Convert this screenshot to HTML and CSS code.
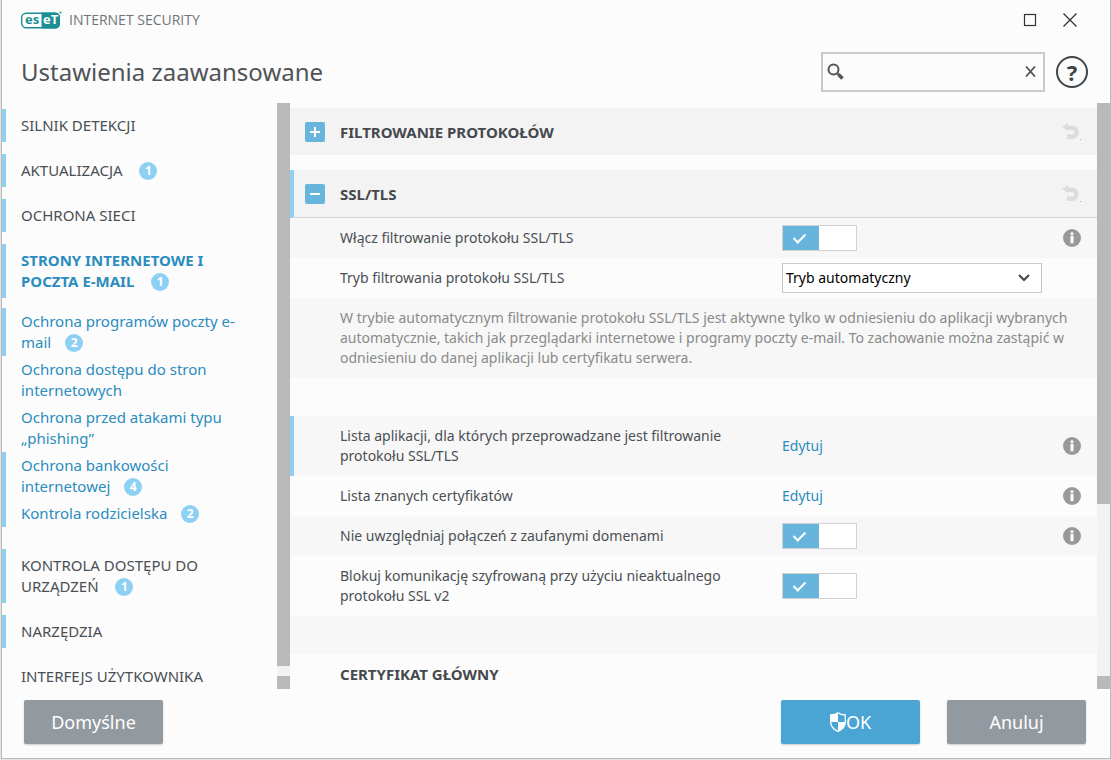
FILE: index.html
```html
<!DOCTYPE html>
<html lang="pl">
<head>
<meta charset="utf-8">
<title>Ustawienia zaawansowane</title>
<link rel="stylesheet" href="styles.css">
</head>
<body>
<svg class="defs" aria-hidden="true">
  <symbol id="undo" viewBox="0 0 20 18">
    <path d="M4.500 4.800h5.500a4.500 4.500 0 0 1 0 9H5" fill="none" stroke="currentColor" stroke-width="4.400"/>
    <path d="M0 3.800 6 0v8z" fill="currentColor"/>
    <path d="M18 16h1v1h-1z" fill="#aaa"/>
  </symbol>
  <symbol id="info" viewBox="0 0 18 18">
    <circle cx="9" cy="9" r="9" fill="#999"/>
    <path d="M7.500 3.500h3v2.200h-3zM7.500 6.700h3v7.500h-3z" fill="#fff"/>
  </symbol>
</svg>
<div class="window">
  <header class="titlebar">
    <div class="brand">
      <svg class="logo" viewBox="0 0 41 18" role="img" aria-label="ESET">
        <rect x="0.700" y="2.200" width="37.600" height="14.600" rx="4.500" fill="#fff" stroke="#1b8f94" stroke-width="1.400"/>
        <path d="M20.500 1.500h14a4.500 4.500 0 0 1 4.500 4.500v7a4.500 4.500 0 0 1-4.500 4.500h-14z" fill="#1b8f94"/>
        <text class="logo-text teal" x="4" y="13">es</text>
        <text class="logo-text" x="22" y="13">eT</text>
        <circle cx="39.500" cy="1.500" r="1" fill="#1b8f94"/>
      </svg>
      <span class="product">INTERNET SECURITY</span>
    </div>
    <div class="window-buttons">
      <button type="button" class="icon-button" aria-label="Maksymalizuj">
        <svg width="14" height="14" viewBox="0 0 14 14"><rect x="1.500" y="1.500" width="11" height="11" fill="none" stroke="#333" stroke-width="1.200"/></svg>
      </button>
      <button type="button" class="icon-button" aria-label="Zamknij">
        <svg width="14" height="14" viewBox="0 0 14 14"><path d="M0.500 0.500l13 13M13.500 0.500l-13 13" stroke="#333" stroke-width="1.300"/></svg>
      </button>
    </div>
  </header>
  <div class="heading">
    <h1>Ustawienia zaawansowane</h1>
    <div class="search">
      <svg width="17" height="17" viewBox="0 0 17 17" aria-hidden="true"><circle cx="6.500" cy="6.500" r="5" fill="none" stroke="#555" stroke-width="2"/><path d="M10 10l2 2" stroke="#555" stroke-width="2"/><path d="M11.500 11.500l4 4" stroke="#555" stroke-width="3.600"/></svg>
      <input type="text" aria-label="Szukaj">
      <button type="button" class="icon-button" aria-label="Wyczyść">
        <svg width="11" height="11" viewBox="0 0 11 11"><path d="M1 0.500l9 10M10 0.500l-9 10" stroke="#555" stroke-width="1.800"/></svg>
      </button>
    </div>
    <button type="button" class="help" aria-label="Pomoc">?</button>
  </div>
  <div class="body">
    <nav class="sidebar">
      <a href="#" class="item changed">SILNIK DETEKCJI</a>
      <a href="#" class="item changed">AKTUALIZACJA <span class="badge">1</span></a>
      <a href="#" class="item changed">OCHRONA SIECI</a>
      <a href="#" class="item changed active">STRONY INTERNETOWE I POCZTA E-MAIL <span class="badge">1</span></a>
      <div class="submenu">
        <a href="#" class="subitem changed">Ochrona programów poczty e-mail <span class="badge">2</span></a>
        <a href="#" class="subitem">Ochrona dostępu do stron internetowych</a>
        <a href="#" class="subitem">Ochrona przed atakami typu „phishing”</a>
        <a href="#" class="subitem changed">Ochrona bankowości internetowej <span class="badge">4</span></a>
        <a href="#" class="subitem changed">Kontrola rodzicielska <span class="badge">2</span></a>
      </div>
      <a href="#" class="item changed">KONTROLA DOSTĘPU DO URZĄDZEŃ <span class="badge">1</span></a>
      <a href="#" class="item changed">NARZĘDZIA</a>
      <a href="#" class="item">INTERFEJS UŻYTKOWNIKA</a>
    </nav>
    <div class="scrollbar nav-scroll"><div class="thumb"></div><div></div><div class="thumb"></div></div>
    <main class="content">
      <section class="section">
        <div class="section-head">
          <button type="button" class="expander" aria-label="Rozwiń"><svg width="20" height="20" viewBox="0 0 20 20"><path d="M5 10h10M10 5v10" stroke="#fff" stroke-width="2"/></svg></button>
          <h2>FILTROWANIE PROTOKOŁÓW</h2>
          <button type="button" class="icon-button undo" aria-label="Przywróć"><svg width="20" height="18"><use href="#undo"/></svg></button>
        </div>
      </section>
      <section class="section">
        <div class="section-head changed open">
          <button type="button" class="expander" aria-label="Zwiń"><svg width="20" height="20" viewBox="0 0 20 20"><path d="M5 10h10" stroke="#fff" stroke-width="2"/></svg></button>
          <h2>SSL/TLS</h2>
          <button type="button" class="icon-button undo" aria-label="Przywróć"><svg width="20" height="18"><use href="#undo"/></svg></button>
        </div>
        <div class="rows">
          <div class="row">
            <label class="name" for="ssl">Włącz filtrowanie protokołu SSL/TLS</label>
            <div class="control"><input type="checkbox" class="toggle" id="ssl" checked></div>
            <svg class="info"><use href="#info"/></svg>
          </div>
          <div class="row">
            <label class="name" for="mode">Tryb filtrowania protokołu SSL/TLS</label>
            <div class="control">
              <div class="select">
                <select id="mode"><option>Tryb automatyczny</option></select>
                <svg class="chevron" viewBox="0 0 12 8" aria-hidden="true"><path d="M1 1l5 5 5-5" fill="none" stroke="#444" stroke-width="2"/></svg>
              </div>
            </div>
          </div>
          <p class="row note">W trybie automatycznym filtrowanie protokołu SSL/TLS jest aktywne tylko w odniesieniu do aplikacji wybranych automatycznie, takich jak przeglądarki internetowe i programy poczty e-mail. To zachowanie można zastąpić w odniesieniu do danej aplikacji lub certyfikatu serwera.</p>
          <div class="row spacer"></div>
          <div class="row changed">
            <span class="name">Lista aplikacji, dla których przeprowadzane jest filtrowanie protokołu SSL/TLS</span>
            <div class="control"><a href="#">Edytuj</a></div>
            <svg class="info"><use href="#info"/></svg>
          </div>
          <div class="row">
            <span class="name">Lista znanych certyfikatów</span>
            <div class="control"><a href="#">Edytuj</a></div>
            <svg class="info"><use href="#info"/></svg>
          </div>
          <div class="row">
            <label class="name" for="trusted">Nie uwzględniaj połączeń z zaufanymi domenami</label>
            <div class="control"><input type="checkbox" class="toggle" id="trusted" checked></div>
            <svg class="info"><use href="#info"/></svg>
          </div>
          <div class="row">
            <label class="name" for="sslv2">Blokuj komunikację szyfrowaną przy użyciu nieaktualnego protokołu SSL v2</label>
            <div class="control"><input type="checkbox" class="toggle" id="sslv2" checked></div>
          </div>
          <div class="row spacer"></div>
          <div class="row"><h2>CERTYFIKAT GŁÓWNY</h2></div>
        </div>
      </section>
    </main>
    <div class="scrollbar content-scroll"><div class="thumb"></div><div></div><div class="thumb"></div></div>
  </div>
  <footer class="footer">
    <button type="button" class="button">Domyślne</button>
    <div class="actions">
      <button type="button" class="button primary">
        <svg width="16" height="20" viewBox="0 0 16 20" aria-hidden="true"><path d="M8 0.700C10 2.500 12.500 3 15.300 3v7c0 4-3 7.500-7.300 9.300C3.700 17.500 0.700 14 0.700 10V3C3.500 3 6 2.500 8 0.700z" fill="none" stroke="#fff" stroke-width="1.300"/><path d="M8 1v9H1V3C4 3 6 2.500 8 1zM8 10h7c0 4-3 7.500-7 9z" fill="#fff"/></svg>OK
      </button>
      <button type="button" class="button">Anuluj</button>
    </div>
  </footer>
</div>
</body>
</html>
```

FILE: styles.css
```css
* { box-sizing: border-box; }

body {
  margin: 0;
  height: 100vh;
  padding: 0 0 1px 1px;
  background: #e4e4e4;
  font-family: "Noto Sans", "Open Sans", sans-serif;
  font-size: 14px;
  line-height: 20px;
  color: #4a4f54;
}

h1, h2, p { margin: 0; }
a { color: #2b8cbe; text-decoration: none; }
button, input, select { font: inherit; color: inherit; }
svg { display: block; flex: none; }
.defs { display: none; }

.window {
  display: flex;
  flex-direction: column;
  height: 100%;
  background: #fcfcfc;
  border: 1px solid #b9b9b9;
  border-width: 0 1px 1px;
}

.icon-button {
  display: flex;
  align-items: center;
  justify-content: center;
  padding: 0;
  border: 0;
  background: none;
}

.titlebar {
  display: flex;
  align-items: center;
  justify-content: space-between;
  height: 40px;
  padding: 0 33px 0 19px;
}
.brand { display: flex; align-items: center; gap: 7px; }
.logo { width: 41px; height: 18px; }
.logo-text { font: bold 13px "Open Sans", sans-serif; fill: #fff; }
.logo-text.teal { fill: #1b8f94; }
.product { font-family: "Open Sans", sans-serif; font-size: 14px; color: #6f7478; }
.window-buttons { display: flex; gap: 26px; }

.heading {
  display: flex;
  align-items: center;
  height: 63px;
  padding: 0 22px 0 19px;
}
h1 { flex: 1; font-size: 24px; line-height: 32px; font-weight: 400; color: #505355; }
.search {
  display: flex;
  align-items: center;
  width: 224px;
  height: 40px;
  margin-right: 11px;
  padding: 0 7px 0 4px;
  border: 2px solid #cacaca;
}
.search input {
  flex: 1;
  min-width: 0;
  border: 0;
  background: none;
  outline: 0;
}
.help {
  width: 32px;
  height: 32px;
  padding: 0;
  border: 2px solid #3d4449;
  border-radius: 50%;
  background: none;
  color: #3d4449;
  font-size: 22px;
  line-height: 26px;
  font-weight: 700;
}

.body { display: flex; flex: 1; min-height: 0; }

.sidebar {
  width: 275px;
  padding-top: 6px;
  overflow: hidden;
  font-size: 15px;
  line-height: 21px;
}
.item, .subitem {
  display: block;
  padding: 6px 32px 6px 15px;
  border-left: 4px solid transparent;
}
.item { margin-bottom: 12px; color: #4a4f54; }
.item.active { margin-bottom: 10px; font-weight: 700; color: #2b8cbe; }
.subitem { padding-top: 3px; padding-bottom: 3px; }
.submenu { margin-bottom: 22px; }
.changed { border-left: 4px solid #8dd0ef; }
.badge {
  display: inline-block;
  width: 18px;
  height: 18px;
  margin-top: -3px;
  margin-left: 10px;
  border-radius: 50%;
  background: #8dd0f3;
  color: #fff;
  font-size: 12px;
  line-height: 18px;
  font-weight: 700;
  text-align: center;
  vertical-align: 1px;
}
.item .badge { margin-left: 13px; }

.scrollbar {
  display: grid;
  width: 13px;
  background: #f2f2f2;
}
.nav-scroll { grid-template-rows: 57fr 1fr 13px; }
.content-scroll { grid-template-rows: 7fr 3fr 13px; }
.thumb { background: #b9b9b9; }

.content { flex: 1; min-width: 0; padding-top: 5px; overflow: hidden; }
.section { margin-bottom: 15px; }
.section-head {
  display: flex;
  align-items: center;
  height: 47px;
  padding: 0 15px;
  background: #f3f3f3;
}
.section-head.changed { padding-left: 11px; }
.section-head.open { height: 48px; border-bottom: 1px solid #d2d5d8; }
.expander {
  width: 20px;
  height: 20px;
  margin-right: 15px;
  padding: 0;
  border: 0;
  border-radius: 2px;
  background: #67b4dc;
}
h2 { font-size: 15px; line-height: 20px; font-weight: 700; color: #45494d; }
.undo { margin-left: auto; color: #dcdcdc; }

.row {
  display: flex;
  align-items: center;
  min-height: 40px;
  padding: 0 16px 0 50px;
}
.row:nth-child(odd) { background: #f7f7f7; }
.row.changed { padding-left: 46px; }
.row.spacer { min-height: 38px; }
.row.note { padding-top: 10px; padding-bottom: 10px; color: #8a8a8a; }
.name { width: 442px; padding: 10px 45px 10px 0; }
.control { flex: 1; }
.info { width: 18px; height: 18px; }

.toggle {
  display: block;
  position: relative;
  appearance: none;
  width: 75px;
  height: 26px;
  margin: 0;
  border: 1px solid #d2d2d2;
  background: #fff;
}
.toggle:checked { background: linear-gradient(to right, #67b4dc 36px, #fff 36px); }
.toggle:checked::after {
  content: "";
  box-sizing: border-box;
  position: absolute;
  left: 13px;
  top: 5px;
  width: 7px;
  height: 12px;
  border: solid #fff;
  border-width: 0 2px 2px 0;
  transform: rotate(45deg);
}

.select { position: relative; width: 260px; }
.select select {
  display: block;
  width: 100%;
  height: 30px;
  padding: 0 3px;
  border: 1px solid #c8c8c8;
  border-radius: 0;
  background: #fff;
  appearance: none;
  color: #000;
}
.chevron { position: absolute; right: 12px; top: 11px; width: 12px; height: 8px; }

.footer {
  display: flex;
  align-items: flex-start;
  justify-content: space-between;
  padding: 11px 24px 14px 22px;
}
.actions { display: flex; gap: 27px; }
.button {
  display: flex;
  align-items: center;
  justify-content: center;
  width: 139px;
  height: 44px;
  padding: 0;
  border: 0;
  border-radius: 2px;
  background: #92999f;
  box-shadow: 0 1px 2px #ccc;
  color: #fff;
  font-size: 18px;
}
.button.primary { background: #4aa4d4; }
```
